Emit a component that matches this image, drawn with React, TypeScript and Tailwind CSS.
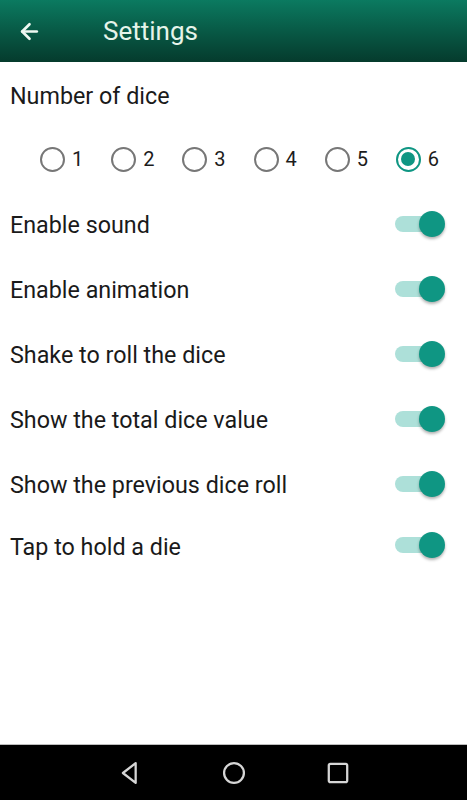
import { ArrowLeft } from "lucide-react";

const toggles = [
  "Enable sound",
  "Enable animation",
  "Shake to roll the dice",
  "Show the total dice value",
  "Show the previous dice roll",
  "Tap to hold a die",
];

const Switch = () => (
  <div className="relative w-[52px] h-[26px]">
    <div className="absolute left-0 top-[5px] w-[46px] h-[16px] rounded-full bg-[#ade0d9]" />
    <div className="absolute right-[2px] top-0 w-[26px] h-[26px] rounded-full bg-[#0f9683] shadow-[0_2px_3px_rgba(0,0,0,0.3)]" />
  </div>
);

const Radio = ({ label, checked }: { label: string; checked?: boolean }) => (
  <div className="w-[71.6px] flex items-center gap-[7px]">
    {checked ? (
      <div className="w-[25px] h-[25px] rounded-full border-[2.5px] border-[#0f9683] flex items-center justify-center">
        <div className="w-[14px] h-[14px] rounded-full bg-[#0f9683]" />
      </div>
    ) : (
      <div className="w-[25px] h-[25px] rounded-full border-[2.5px] border-[#777]" />
    )}
    <span className="text-[20px] text-[#1c1c1c]">{label}</span>
  </div>
);

export default function App() {
  return (
    <div className="w-[467px] h-[800px] flex flex-col bg-white font-['Roboto',sans-serif]">
      {/* Toolbar */}
      <div className="h-[62px] shrink-0 flex items-center bg-gradient-to-b from-[#0b7a60] to-[#053b2d]">
        <ArrowLeft className="ml-[17px] text-[#eef8f1]" size={25} strokeWidth={2.6} />
        <span className="ml-[61px] text-[26px] text-[#e6f4ea]">Settings</span>
      </div>

      {/* Content */}
      <div className="flex-1 flex flex-col">
        <div className="h-[65px] flex items-center pl-[10px] pt-[3px] text-[23.3px] text-[#1a1a1a]">
          Number of dice
        </div>
        <div className="h-[64px] flex items-center pl-[40px]">
          {["1", "2", "3", "4", "5", "6"].map((n) => (
            <Radio key={n} label={n} checked={n === "6"} />
          ))}
        </div>
        {toggles.map((t, i) => (
          <div
            key={t}
            className={`${i === toggles.length - 1 ? "h-[58px]" : "h-[65px]"} flex items-center justify-between pl-[10px] pr-[20px]`}
          >
            <span className="pt-[4px] text-[23.3px] text-[#1a1a1a]">{t}</span>
            <Switch />
          </div>
        ))}
      </div>

      {/* Nav bar */}
      <div className="h-[56px] shrink-0 bg-black border-t border-[#bdbdbd] flex items-center justify-center gap-[70px]">
        <svg width="34" height="34" viewBox="0 0 24 24" fill="none" stroke="#d6d6d6" strokeWidth="1.6" strokeLinejoin="round">
          <path d="M16 5 L7 12 L16 19 Z" />
        </svg>
        <svg width="34" height="34" viewBox="0 0 24 24" fill="none" stroke="#d6d6d6" strokeWidth="1.6">
          <circle cx="12" cy="12" r="7" />
        </svg>
        <svg width="34" height="34" viewBox="0 0 24 24" fill="none" stroke="#d6d6d6" strokeWidth="1.6">
          <rect x="5.5" y="5.5" width="13" height="13" rx="1.2" />
        </svg>
      </div>
    </div>
  );
}
